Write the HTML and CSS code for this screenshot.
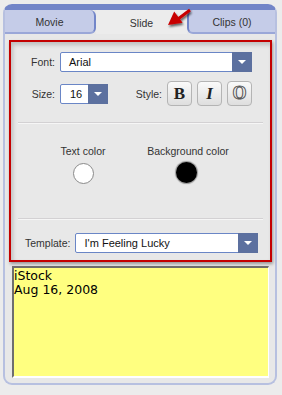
FILE: index.html
```html
<!DOCTYPE html>
<html>
<head>
<meta charset="utf-8">
<link rel="stylesheet" href="styles.css">
</head>
<body>
<div class="frame">
  <div class="tabs">
    <div class="tab off movie">Movie</div>
    <div class="tab on">Slide</div>
    <div class="tab off clips">Clips (0)</div>
  </div>
  <div class="redbox">
    <div class="inner">
      <div class="row font-row">
        <span class="lbl">Font:</span>
        <div class="select wide"><span class="val">Arial</span><span class="btn"><span class="tri"></span></span></div>
      </div>
      <div class="row size-row">
        <span class="lbl">Size:</span>
        <div class="select small"><span class="val">16</span><span class="btn"><span class="tri"></span></span></div>
        <span class="style-lbl">Style:</span>
        <div class="sbtns">
          <span class="sbtn b">B</span>
          <span class="sbtn i">I</span>
          <span class="sbtn o">O</span>
        </div>
      </div>
      <div class="sep sep1"></div>
      <div class="colors">
        <div class="ccol">
          <span class="clbl">Text color</span>
          <span class="dot white"></span>
        </div>
        <div class="ccol">
          <span class="clbl">Background color</span>
          <span class="dot black"></span>
        </div>
      </div>
      <div class="sep sep2"></div>
      <div class="row tpl-row">
        <span class="tlbl">Template:</span>
        <div class="select tpl"><span class="val">I'm Feeling Lucky</span><span class="btn"><span class="tri"></span></span></div>
      </div>
    </div>
  </div>
  <div class="note">iStock<br>Aug 16, 2008</div>
</div>
<svg class="arrow" width="40" height="32" viewBox="160 2 40 32">
  <defs>
    <filter id="sh" x="-50%" y="-50%" width="200%" height="200%">
      <feGaussianBlur in="SourceAlpha" stdDeviation="1.2"/>
      <feOffset dx="1" dy="2" result="b"/>
      <feComponentTransfer><feFuncA type="linear" slope="0.6"/></feComponentTransfer>
      <feMerge><feMergeNode/><feMergeNode in="SourceGraphic"/></feMerge>
    </filter>
  </defs>
  <g filter="url(#sh)">
    <line x1="190" y1="10" x2="178" y2="19" stroke="#c80000" stroke-width="3"/>
    <polygon points="168,25 174.2,11.6 182.6,22.8" fill="#c80000"/>
  </g>
</svg>
</body>
</html>
```
FILE: styles.css
```css
* { box-sizing: border-box; }
html, body { margin: 0; padding: 0; }
body {
  background: #ececec;
  width: 282px;
  height: 395px;
  overflow: hidden;
  position: relative;
  font-family: "Liberation Sans", Arial, sans-serif;
  color: #333;
}
.frame {
  margin: 4px 5px 0 3px;
  background: #e8e8e8;
  border: 2px solid #b7c0e0;
  border-top: 6px solid #7285c8;
  border-radius: 9px;
  padding-bottom: 5px;
}
.tabs {
  display: grid;
  grid-template-columns: 91px 91px 88px;
  height: 24px;
}
.tab {
  display: flex;
  align-items: center;
  justify-content: center;
  font-size: 10.5px;
  color: #333;
  padding-top: 2px;
}
.tab.off {
  background: #c5cce8;
  border-bottom: 2px solid #9aa7d8;
}
.tab.movie {
  border-right: 2px solid #7386c9;
  border-radius: 0 6px 6px 0;
}
.tab.clips {
  border-left: 2px solid #7386c9;
  border-radius: 6px 0 0 6px;
}
.tab.on {
  background: #ececec;
}
.redbox {
  margin: 6px 3px 0 4px;
  border: 2px solid #c40000;
  box-shadow: 1px 2px 3px rgba(0, 0, 0, 0.35);
}
.inner {
  height: 218px;
  padding: 10px 18px 0 0;
  box-shadow: inset 2px 3px 4px rgba(0, 0, 0, 0.18);
  background: #e8e8e8;
}
.row {
  display: flex;
  align-items: center;
}
.lbl {
  width: 44px;
  text-align: right;
  font-size: 10.5px;
  margin-right: 5px;
}
.font-row { height: 20px; }
.size-row { height: 25px; margin-top: 9px; }
.select {
  height: 20px;
  border: 1px solid #6a86c6;
  background: #fff;
  display: flex;
  align-items: stretch;
  border-radius: 2px;
  font-size: 11px;
  color: #111;
}
.select .val {
  flex: 1;
  display: flex;
  align-items: center;
  padding-left: 8px;
}
.select .btn {
  width: 20px;
  background: #5c709f;
  margin: -1px -1px -1px 0;
  display: flex;
  align-items: center;
  justify-content: center;
}
.tri {
  width: 0;
  height: 0;
  border-left: 4px solid transparent;
  border-right: 4px solid transparent;
  border-top: 4px solid #fff;
}
.select.wide { width: 192px; }
.select.small { width: 48px; }
.select.small .val { padding-left: 9px; }
.style-lbl {
  margin-left: auto;
  margin-right: 5px;
  font-size: 10.5px;
}
.sbtns {
  display: flex;
  gap: 5px;
}
.sbtn {
  width: 25px;
  height: 25px;
  border: 1px solid #b4b4b4;
  border-radius: 4px;
  background: linear-gradient(#fafafa, #dedede);
  display: flex;
  align-items: center;
  justify-content: center;
  font-family: "Liberation Serif", "Times New Roman", serif;
  color: #222;
}
.sbtn.b { font-weight: bold; font-size: 17px; }
.sbtn.i { font-weight: bold; font-style: italic; font-size: 17px; }
.sbtn.o {
  font-size: 18px;
  color: transparent;
  -webkit-text-stroke: 1px #555;
  font-weight: bold;
}
.sep {
  margin-left: 7px;
  margin-right: -11px;
  height: 2px;
  border-top: 1px solid #d3d1d3;
  border-bottom: 1px solid #f6f6f6;
}
.sep1 { margin-top: 16px; }
.colors {
  display: grid;
  grid-template-columns: 100px 100px;
  column-gap: 5px;
  padding-left: 22px;
  margin-top: 21px;
}
.ccol {
  display: flex;
  flex-direction: column;
  align-items: center;
}
.clbl {
  font-size: 10.5px;
  line-height: 13px;
  height: 13px;
}
.dot {
  margin-top: 5px;
  width: 21px;
  height: 21px;
  border-radius: 50%;
}
.dot.white {
  background: #fff;
  border: 1px solid #8a8a8a;
}
.dot.black {
  background: #000;
  margin-left: -4px;
  margin-top: 4px;
  box-shadow: 0 0 1px 1px rgba(0, 0, 0, 0.35);
}
.sep2 { margin-top: 34px; }
.tpl-row { margin-top: 13px; padding-left: 14px; }
.tlbl {
  font-size: 10.5px;
  margin-right: 4px;
}
.select.tpl { width: 183px; margin-right: -6px; }
.select.tpl .val { padding-left: 9px; }
.note {
  margin: 4px 6px 0 7px;
  height: 112px;
  background: #ffff80;
  border-top: 2px solid #6e6e6e;
  border-left: 2px solid #6e6e6e;
  border-right: 1px solid #fff;
  border-bottom: 2px solid #fff;
  font-family: "DejaVu Sans", Verdana, sans-serif;
  font-size: 12.5px;
  line-height: 14px;
  color: #000;
  padding: 1px 0 0 0;
}
.arrow {
  position: absolute;
  left: 160px;
  top: 2px;
}
```
